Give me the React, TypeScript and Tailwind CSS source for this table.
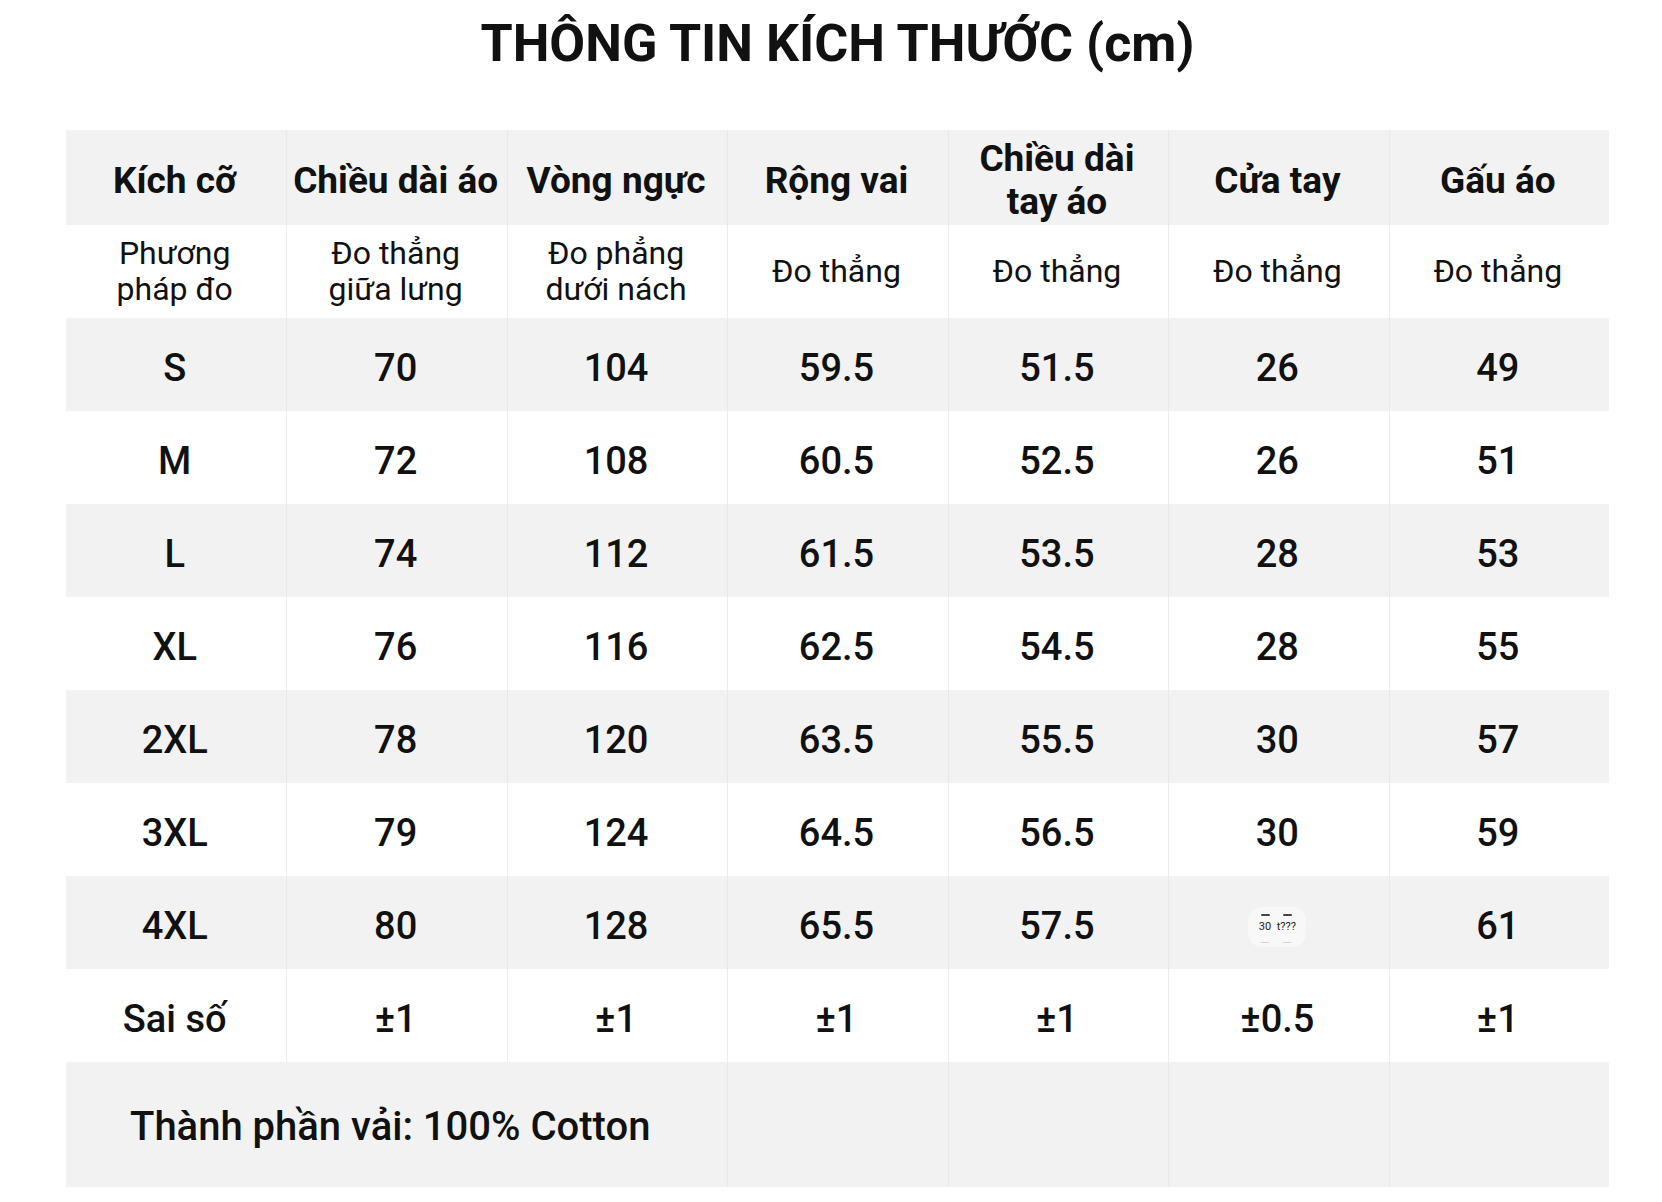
import React from "react";

const headers: React.ReactNode[] = [
  "Kích cỡ",
  "Chiều dài áo",
  "Vòng ngực",
  "Rộng vai",
  <>
    Chiều dài
    <br />
    tay áo
  </>,
  "Cửa tay",
  "Gấu áo",
];

const methods: React.ReactNode[] = [
  <>
    Phương
    <br />
    pháp đo
  </>,
  <>
    Đo thẳng
    <br />
    giữa lưng
  </>,
  <>
    Đo phẳng
    <br />
    dưới nách
  </>,
  "Đo thẳng",
  "Đo thẳng",
  "Đo thẳng",
  "Đo thẳng",
];

const rows: string[][] = [
  ["S", "70", "104", "59.5", "51.5", "26", "49"],
  ["M", "72", "108", "60.5", "52.5", "26", "51"],
  ["L", "74", "112", "61.5", "53.5", "28", "53"],
  ["XL", "76", "116", "62.5", "54.5", "28", "55"],
  ["2XL", "78", "120", "63.5", "55.5", "30", "57"],
  ["3XL", "79", "124", "64.5", "56.5", "30", "59"],
  ["4XL", "80", "128", "65.5", "57.5", "__ART__", "61"],
  ["Sai số", "±1", "±1", "±1", "±1", "±0.5", "±1"],
];

function Artifact() {
  return (
    <div className="relative flex h-[40px] w-[58px] items-center justify-center rounded-[14px] bg-[#f8f8f8]">
      <div className="absolute left-[13px] top-[7px] h-[2px] w-[9px] rounded-full bg-[#444]" />
      <div className="absolute left-[35px] top-[7px] h-[2px] w-[9px] rounded-full bg-[#444]" />
      <div className="absolute left-[13px] top-[35px] h-[1px] w-[8px] rounded-full bg-[#d0d0d0]" />
      <div className="absolute left-[35px] top-[35px] h-[1px] w-[8px] rounded-full bg-[#d0d0d0]" />
      <span className="text-[11px] leading-none font-normal text-[#222] whitespace-nowrap">
        30&nbsp;&nbsp;t???
      </span>
    </div>
  );
}

export default function App() {
  return (
    <div className="min-h-[1202px] w-full bg-white font-['Roboto','Noto_Sans',sans-serif] text-[#111]">
      <div className="ml-[66px] w-[1543px] pt-[18px]">
        <h1 className="text-center text-[52px] leading-[52px] font-bold">
          THÔNG TIN KÍCH THƯỚC (cm)
        </h1>

        <div className="mt-[60px]">
          {/* header row */}
          <div className="grid h-[95px] grid-cols-7 bg-[#f2f2f2]">
            {headers.map((h, i) => (
              <div
                key={i}
                className={`flex items-center justify-center pt-[5px] pr-[3px] text-center text-[37px] leading-[43px] font-bold whitespace-nowrap ${
                  i > 0 ? "border-l border-[#e9e9e9]" : ""
                }`}
              >
                {h}
              </div>
            ))}
          </div>

          {/* measurement row */}
          <div className="grid h-[93px] grid-cols-7 bg-white">
            {methods.map((m, i) => (
              <div
                key={i}
                className={`flex items-center justify-center pb-[2px] pr-[3px] text-center text-[32px] leading-[36px] font-normal whitespace-nowrap ${
                  i > 0 ? "border-l border-[#ececec]" : ""
                }`}
              >
                {m}
              </div>
            ))}
          </div>

          {/* data rows */}
          {rows.map((r, ri) => (
            <div
              key={ri}
              className={`grid h-[93px] grid-cols-7 ${
                ri % 2 === 0 ? "bg-[#f2f2f2]" : "bg-white"
              }`}
            >
              {r.map((c, ci) => (
                <div
                  key={ci}
                  className={`flex items-center justify-center pt-[8px] pr-[3px] text-center text-[38px] font-medium whitespace-nowrap ${
                    ci > 0
                      ? ri % 2 === 0
                        ? "border-l border-[#e9e9e9]"
                        : "border-l border-[#ececec]"
                      : ""
                  }`}
                >
                  {c === "__ART__" ? <Artifact /> : c}
                </div>
              ))}
            </div>
          ))}

          {/* footer row */}
          <div className="grid h-[125px] grid-cols-7 bg-[#f2f2f2]">
            <div className="col-span-3 flex items-center pl-[64px] pt-[4px] text-[40px] font-medium whitespace-nowrap">
              Thành phần vải: 100% Cotton
            </div>
            <div className="border-l border-[#e9e9e9]" />
            <div className="border-l border-[#e9e9e9]" />
            <div className="border-l border-[#e9e9e9]" />
            <div className="border-l border-[#e9e9e9]" />
          </div>
        </div>
      </div>
    </div>
  );
}
